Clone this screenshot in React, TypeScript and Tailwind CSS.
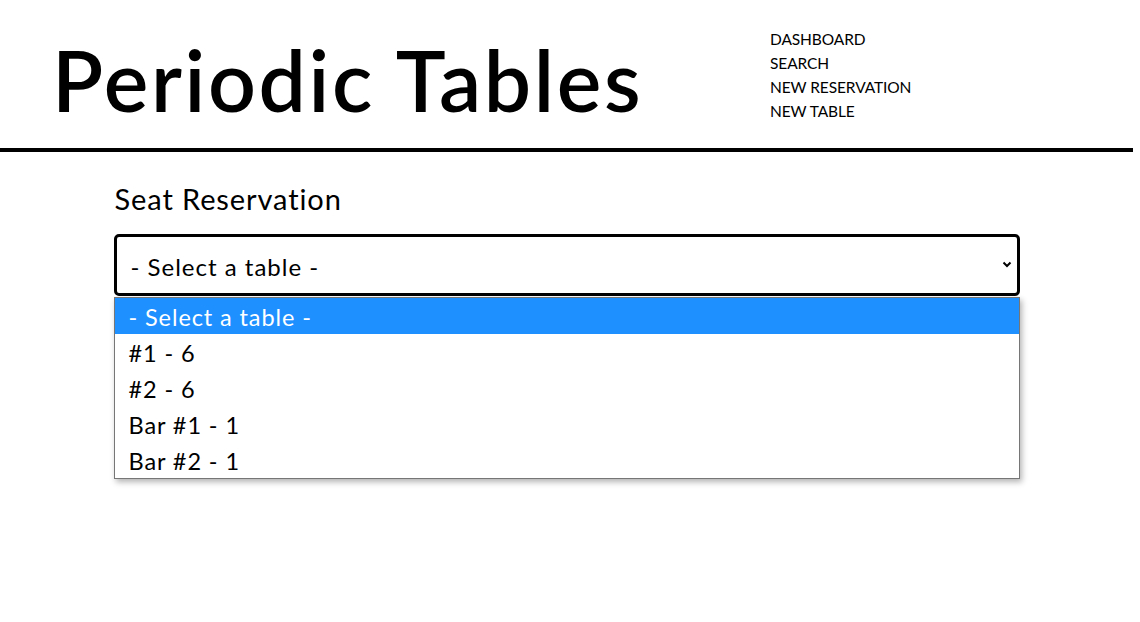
const font = { fontFamily: 'Lato, "Noto Sans", sans-serif' };

const links = ['DASHBOARD', 'SEARCH', 'NEW RESERVATION', 'NEW TABLE'];
const opts = ['- Select a table -', '#1 - 6', '#2 - 6', 'Bar #1 - 1', 'Bar #2 - 1'];

export default function App() {
  return (
    <div className="w-[1133px] min-h-[622px] bg-white text-black" style={font}>
      <header className="flex h-[148px] border-b-4 border-black box-content">
        <h1 className="pl-[52px] pt-[30px] text-[84px] leading-[100px] font-semibold tracking-[2.6px] w-[770px] shrink-0 whitespace-nowrap">Periodic Tables</h1>
        <nav className="pt-[27px] flex flex-col text-[15.5px] leading-[24px] tracking-[-0.1px]">
          {links.map(l => <a key={l} href="#" className="block">{l}</a>)}
        </nav>
      </header>
      <main className="w-[906px] mx-auto pt-[28px]">
        <h2 className="text-[29px] leading-[38px] tracking-[0.9px] pl-[1px]">Seat Reservation</h2>
        <div className="relative mt-[16px]">
          <div className="h-[62px] border-[3px] border-black rounded-[5px] flex items-center justify-between pl-[14px] pr-[5px] text-[24px] tracking-[1px]">
            <span className="mt-[3px]">- Select a table -</span>
            <svg width="10" height="8" viewBox="0 0 10 8" className="mt-[-2px]"><path d="M1.5 2.5 L5 6 L8.5 2.5" fill="none" stroke="black" strokeWidth="2"/></svg>
          </div>
          <ul className="absolute left-0 right-0 top-[63px] border border-[#767676] bg-white shadow-[2px_3px_6px_rgba(0,0,0,0.3)] text-[23.5px] tracking-[0.9px] leading-[36px]">
            {opts.map((o, i) => (
              <li key={o} className={i === 0 ? 'bg-[#1e90ff] text-white pl-[14px]' : 'pl-[14px]'}>
                <span className="relative top-[1px]">{o}</span>
              </li>
            ))}
          </ul>
        </div>
      </main>
    </div>
  );
}
